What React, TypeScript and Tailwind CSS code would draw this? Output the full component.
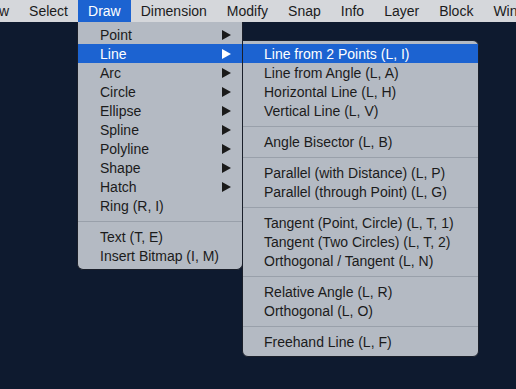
import React from "react";

type Item = { label: string; sub?: boolean; active?: boolean } | "sep";

const menuBar = ["View", "Select", "Draw", "Dimension", "Modify", "Snap", "Info", "Layer", "Block", "Window"];

const drawItems: Item[] = [
  { label: "Point", sub: true },
  { label: "Line", sub: true, active: true },
  { label: "Arc", sub: true },
  { label: "Circle", sub: true },
  { label: "Ellipse", sub: true },
  { label: "Spline", sub: true },
  { label: "Polyline", sub: true },
  { label: "Shape", sub: true },
  { label: "Hatch", sub: true },
  { label: "Ring (R, I)" },
  "sep",
  { label: "Text (T, E)" },
  { label: "Insert Bitmap (I, M)" },
];

const lineItems: Item[] = [
  { label: "Line from 2 Points (L, I)", active: true },
  { label: "Line from Angle (L, A)" },
  { label: "Horizontal Line (L, H)" },
  { label: "Vertical Line (L, V)" },
  "sep",
  { label: "Angle Bisector (L, B)" },
  "sep",
  { label: "Parallel (with Distance) (L, P)" },
  { label: "Parallel (through Point) (L, G)" },
  "sep",
  { label: "Tangent (Point, Circle) (L, T, 1)" },
  { label: "Tangent (Two Circles) (L, T, 2)" },
  { label: "Orthogonal / Tangent (L, N)" },
  "sep",
  { label: "Relative Angle (L, R)" },
  { label: "Orthogonal (L, O)" },
  "sep",
  { label: "Freehand Line (L, F)" },
];

function Arrow({ white }: { white?: boolean }) {
  return (
    <svg width="9" height="10" viewBox="0 0 9 10" className="shrink-0 translate-x-px">
      <polygon points="0,0 9,5 0,10" fill={white ? "#ffffff" : "#1a1a1a"} />
    </svg>
  );
}

function MenuRows({ items, pl }: { items: Item[]; pl: string }) {
  return (
    <>
      {items.map((it, i) =>
        it === "sep" ? (
          <div key={i} className="h-[12px] flex items-center">
            <div className="h-px w-full bg-[#99a0aa]" />
          </div>
        ) : (
          <div
            key={i}
            className={`h-[19px] leading-[19px] flex items-center pr-[12px] ${pl} ${
              it.active ? "bg-[#1c63d1] text-white" : "text-[#1b1b1b]"
            }`}
          >
            <span className="flex-1 whitespace-nowrap translate-y-px">{it.label}</span>
            {it.sub && <Arrow white={it.active} />}
          </div>
        )
      )}
    </>
  );
}

export default function App() {
  return (
    <div className="relative w-[516px] h-[389px] overflow-hidden bg-[#0e1a2f] font-['Liberation_Sans',Arial,sans-serif] text-[14px]">
      <div className="flex h-[22px] items-center bg-[#d5d7db] text-[#1b1b1b] ml-[-31px] whitespace-nowrap">
        {menuBar.map((m) => (
          <div
            key={m}
            className={`h-[22px] leading-[22px] px-[10px] ${m === "Draw" ? "bg-[#1c63d1] text-white" : ""}`}
          >
            {m}
          </div>
        ))}
      </div>

      <div className="absolute left-[77px] top-[22px] w-[166px] pt-[3px] pb-[4px] bg-[#b4bac3] border border-t-0 border-[#1a1f2a] rounded-b-[6px]">
        <MenuRows items={drawItems} pl="pl-[22px]" />
      </div>

      <div className="absolute left-[242px] top-[40px] w-[237px] pt-[3px] pb-[5px] bg-[#b4bac3] border border-[#1a1f2a] rounded-[6px] rounded-tl-none">
        <MenuRows items={lineItems} pl="pl-[21px]" />
      </div>
    </div>
  );
}
